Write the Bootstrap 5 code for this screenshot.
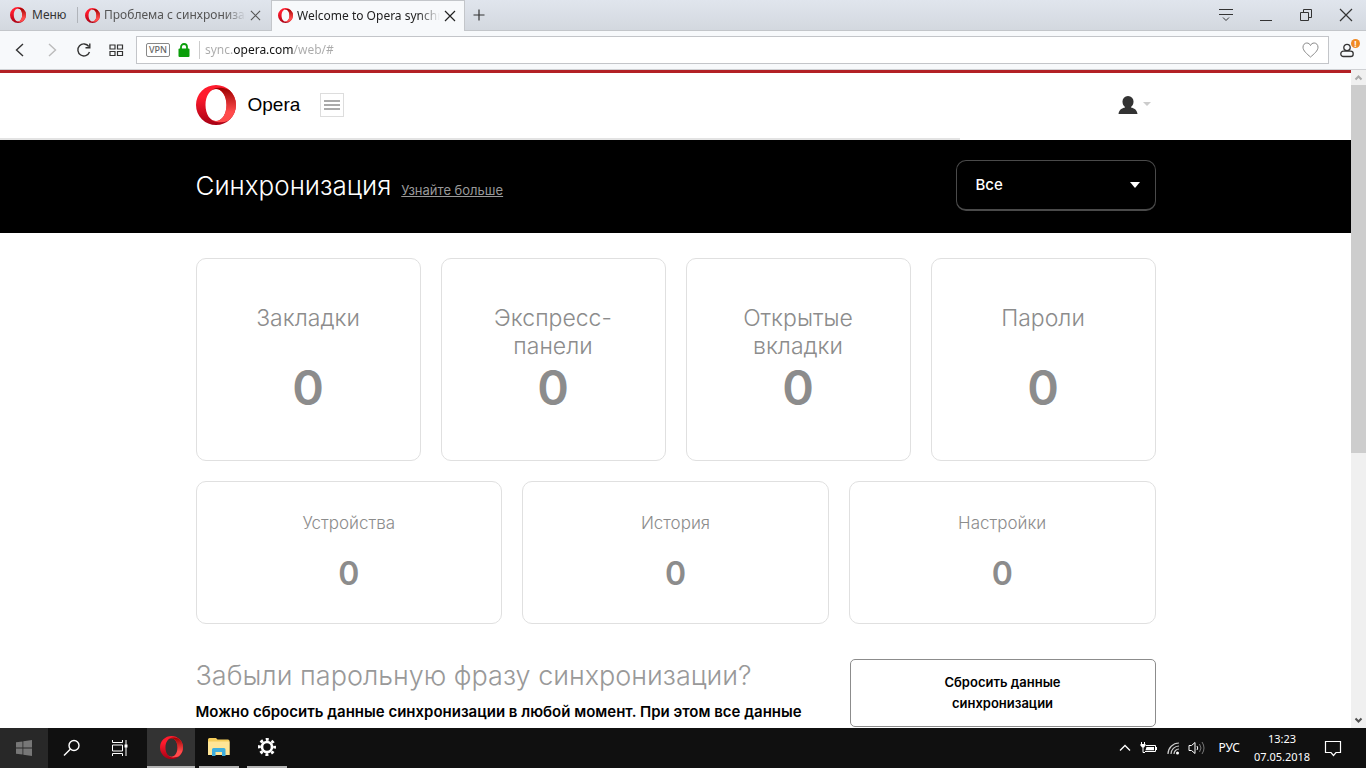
<!DOCTYPE html>
<html lang="ru">
<head>
<meta charset="utf-8">
<meta name="viewport" content="width=device-width, initial-scale=1">
<title>Welcome to Opera synchronization</title>
<link href="https://cdn.jsdelivr.net/npm/bootstrap@5.3.0/dist/css/bootstrap.min.css" rel="stylesheet">
<style>
  :root { --ui: "Noto Sans", "Open Sans", sans-serif; --site: Inter, "Liberation Sans", sans-serif; }
  body { font-family: var(--ui); font-size: 12px; line-height: 16px; color: #222; background: #fff; }
  svg { display: block; flex-shrink: 0; }
  button { border: 0; background: none; padding: 0; color: inherit; }

  /* browser chrome */
  .tabstrip { height: 31px; background: linear-gradient(#e0e5ed, #d3d8df); border-bottom: 1px solid #c3c6ca; }
  .menu-btn { width: 77px; padding-left: 10px; gap: 6px; color: #333; }
  .tab-item { height: 31px; gap: 4px; color: #555; }
  .tab-idle { width: 194px; padding: 0 10px 0 8px; }
  .tab-idle::before { content: ""; width: 1px; height: 16px; margin-left: -8px; margin-right: 3px; background: #b0b4ba; }
  .tab-live { width: 194px; padding: 0 8px 0 6px; background: #f7f9fb; border: 1px solid #c3c6ca; border-bottom: 0; color: #222; }
  .tab-title { overflow: hidden; white-space: nowrap; flex: 1 1 0; min-width: 0; -webkit-mask-image: linear-gradient(90deg, #000 85%, transparent); mask-image: linear-gradient(90deg, #000 85%, transparent); }
  .win-controls { gap: 24px; padding-right: 12px; color: #333; }
  .toolbar-row { height: 39px; background: #f7f9fb; border-bottom: 1px solid #cfd1d4; padding: 0 12px; }
  .nav-btns { gap: 16px; width: 124px; color: #333; }
  .address { height: 28px; border: 1px solid #c3c5c9; background: #fff; padding: 0 9px; }
  .vpn { border: 1px solid #888; border-radius: 2px; width: 24px; height: 14px; font-size: 9px; line-height: 12px; text-align: center; font-weight: 500; color: #666; }
  .address-sep { width: 1px; height: 18px; background: #ccc; margin: 0 5px 0 9px; }
  .address-input { border: 0; outline: 0; padding: 0; min-width: 0; color: #111; font-size: 12px; line-height: 20px;
    background: linear-gradient(90deg, #aaa 0 28px, #111 28px 89px, #aaa 89px); -webkit-background-clip: text; background-clip: text; -webkit-text-fill-color: transparent; }
  .alert-dot { top: -4px; right: -6px; width: 9px; height: 9px; border-radius: 50%; background: #f08a24; color: #fff; font-size: 8px; line-height: 9px; text-align: center; font-weight: 700; }
  .profile-btn { margin-left: 11px; }

  /* page */
  .page-view { font-family: var(--site); overflow: hidden; min-width: 0; }
  .content-width { width: 100%; max-width: 960px; margin: 0 auto; }
  .site-top { border-top: 3px solid #b32025; height: 70px; padding-bottom: 4px; }
  .brand-name { font-family: "Liberation Sans", sans-serif; font-size: 19px; line-height: 24px; color: #000; margin-left: 12px; }
  .burger { width: 24px; height: 24px; border: 1px solid #ddd; margin-left: 20px; color: #aaa; }
  .load-line { height: 2px; margin-top: -2px; max-width: 960px; background: #e3e3e3; }
  .hero { background: #000; color: #fff; height: 93px; padding-bottom: 2px; }
  .hero h1 { font-size: 26px; line-height: 32px; font-weight: 300; }
  .hero a { color: #999; font-size: 13px; line-height: 16px; margin-left: 10px; }
  .filter-select { width: 200px; height: 51px; padding: 0 19px; border: 1px solid #4a4a4a; border-bottom-width: 2px; border-radius: 10px; background-color: #000; color: #fff; font-size: 15px; font-weight: 500;
    background-image: url("data:image/svg+xml,%3Csvg xmlns='http://www.w3.org/2000/svg' viewBox='0 0 10 6'%3E%3Cpath fill='%23fff' d='M0 0h10L5 6z'/%3E%3C/svg%3E"); background-size: 10px 6px; background-position: right 15px center; }
  .page-body { padding-top: 25px; }
  .tiles { gap: 20px; margin-bottom: 20px; }
  .tile { flex: 1 1 0; border: 1px solid #e0e0e0; border-radius: 10px; text-align: center; color: #8c8c8c; font-weight: 300; }
  .tile h2 { font-weight: 300; }
  .tile strong { font-weight: 600; }
  .tile-lg { height: 203px; padding: 45px 40px 0; }
  .tile-lg h2 { font-size: 23px; line-height: 28px; height: 56px; margin: 0; }
  .tile-lg strong { font-size: 48px; line-height: 56px; }
  .tile-sm { height: 143px; padding: 29px 20px 0; }
  .tile-sm h2 { font-size: 17px; line-height: 24px; margin: 0 0 19px; }
  .tile-sm strong { font-size: 32px; line-height: 40px; }
  .reset-row { padding-top: 15px; }
  .reset-copy h2 { font-size: 27px; line-height: 34px; font-weight: 300; color: #999; margin: 0 0 8px; white-space: nowrap; }
  .reset-copy p { font-size: 15px; line-height: 21px; font-weight: 600; color: #000; margin: 0; }
  .reset-btn { width: 306px; height: 68px; border: 1px solid #8c8c8c; border-radius: 5px; font-size: 13px; line-height: 21px; font-weight: 600; color: #000; padding: 0 80px; }
  .scroll-rail { width: 15px; background: #f0f0f0; }
  .scroll-thumb { height: 56%; width: 100%; background: #cdcdcd; }

  /* taskbar */
  .taskbar { height: 40px; background: #101010; color: #fff; }
  .task-btn { width: 48px; height: 40px; }
  .task-start { background: #282828; }
  .task-live { background: #333; border-bottom: 2px solid #b5b5b5; margin-left: 3px; }
  .task-open { width: 40px; border-bottom: 2px solid #b5b5b5; }
  .tray { padding-right: 24px; }
  .clock { width: 60px; font-size: 11px; line-height: 18px; text-align: center; }
</style>
</head>
<body class="vh-100 d-flex flex-column overflow-hidden">
<svg width="0" height="0" class="position-absolute" aria-hidden="true">
  <defs>
    <linearGradient id="ringA" x1="0" y1="0" x2="0" y2="1"><stop offset=".3" stop-color="#ff1b2d"/><stop offset="1" stop-color="#a70014"/></linearGradient>
    <linearGradient id="ringB" x1="0" y1="0" x2="0" y2="1"><stop offset="0" stop-color="#9c0000"/><stop offset=".7" stop-color="#ff4b4b"/></linearGradient>
    <symbol id="opera" viewBox="0 0 40 40">
      <path fill="url(#ringA)" fill-rule="evenodd" d="M20 0a20 20 0 1 0 0 40 20 20 0 1 0 0-40zM20 4c6 0 10.500 7 10.500 16S26 36 20 36 9.500 29 9.500 20 14 4 20 4z"/>
      <path fill="url(#ringB)" d="M13.400 7.400C15 5.300 17.500 4 20 4c6 0 10.500 7 10.500 16S26 36 20 36c-2.500 0-5-1.300-6.600-3.400 2.300 2.900 5.600 4.700 9.300 4.700 3.800 0 7.600-.5 10.600-2.400a20 20 0 0 0 0-29.800C30 3 26.300 2.700 22.700 2.700c-3.700 0-7 1.800-9.300 4.700z"/>
    </symbol>
    <symbol id="cross" viewBox="0 0 12 12"><path d="M1 1l10 10M11 1L1 11" fill="none" stroke="currentColor" stroke-width="1.200"/></symbol>
  </defs>
</svg>

<header class="flex-shrink-0">
  <div class="tabstrip d-flex align-items-center">
    <button class="menu-btn d-flex align-items-center"><svg width="16" height="16"><use href="#opera"/></svg>Меню</button>
    <div class="tab-item tab-idle d-flex align-items-center">
      <svg width="15" height="15"><use href="#opera"/></svg>
      <span class="tab-title">Проблема с синхронизац</span>
      <button aria-label="Закрыть вкладку"><svg width="11" height="11"><use href="#cross"/></svg></button>
    </div>
    <div class="tab-item tab-live d-flex align-items-center">
      <svg width="15" height="15"><use href="#opera"/></svg>
      <span class="tab-title">Welcome to Opera synchro</span>
      <button aria-label="Закрыть вкладку"><svg width="12" height="12"><use href="#cross"/></svg></button>
    </div>
    <button class="ms-2" aria-label="Новая вкладка"><svg width="12" height="12" viewBox="0 0 12 12"><path d="M6 .5v11M.5 6h11" stroke="#333" stroke-width="1.200"/></svg></button>
    <div class="win-controls d-flex align-items-center ms-auto">
      <button aria-label="Меню вкладок"><svg width="16" height="14" viewBox="0 0 16 14"><path d="M1 1.500h14M1 6.500h14M5 9.500l3 3 3-3" fill="none" stroke="currentColor"/></svg></button>
      <button aria-label="Свернуть"><svg width="16" height="14" viewBox="0 0 16 14"><path d="M2 12.500h12" stroke="currentColor"/></svg></button>
      <button aria-label="Восстановить"><svg width="16" height="14" viewBox="0 0 16 14"><path d="M2.500 4.500h8v8h-8zM5.500 4.500v-3h8v8h-3" fill="none" stroke="currentColor"/></svg></button>
      <button aria-label="Закрыть"><svg width="16" height="14" viewBox="0 0 16 14"><path d="M2 1l12 12M14 1L2 13" stroke="currentColor" stroke-width="1.200"/></svg></button>
    </div>
  </div>
  <div class="toolbar-row d-flex align-items-center">
    <div class="nav-btns d-flex align-items-center flex-shrink-0">
      <button aria-label="Назад"><svg width="16" height="16" viewBox="0 0 16 16"><path d="M11 2L4.500 8l6.500 6" fill="none" stroke="currentColor" stroke-width="1.400"/></svg></button>
      <button aria-label="Вперёд"><svg width="16" height="16" viewBox="0 0 16 16"><path d="M5 2l6.500 6L5 14" fill="none" stroke="#bbb" stroke-width="1.400"/></svg></button>
      <button aria-label="Обновить"><svg width="16" height="16" viewBox="0 0 16 16"><path d="M13.500 10A6 6 0 1 1 12.800 4.500M13.800 1.500v4.300H9.500" fill="none" stroke="currentColor" stroke-width="1.400"/></svg></button>
      <button aria-label="Экспресс-панель"><svg width="16" height="16" viewBox="0 0 16 16"><path d="M2 3h5v4H2zM9.500 3h5v4h-5zM2 9.500h5v4H2zM9.500 9.500h5v4h-5z" fill="none" stroke="currentColor" stroke-width="1.200"/></svg></button>
    </div>
    <div class="address d-flex align-items-center flex-grow-1">
      <span class="vpn">VPN</span>
      <svg class="ms-2" width="12" height="14" viewBox="0 0 12 14"><path d="M3 6V4a3 3 0 0 1 6 0v2" fill="none" stroke="#0a9e0a" stroke-width="1.800"/><rect x=".5" y="5.500" width="11" height="8.500" rx="1" fill="#0a9e0a"/></svg>
      <span class="address-sep"></span>
      <input class="address-input flex-grow-1" type="text" aria-label="Адрес" value="sync.opera.com/web/#">
      <button aria-label="В закладки"><svg width="17" height="16" viewBox="0 0 17 16"><path d="M8.500 15C5 12 1 8.800 1 5.200 1 2.800 2.700 1 4.800 1c1.600 0 3 .9 3.700 2.500C9.200 1.900 10.600 1 12.200 1 14.300 1 16 2.800 16 5.200c0 3.600-4 6.800-7.500 9.800z" fill="none" stroke="#888"/></svg></button>
    </div>
    <button class="profile-btn position-relative" aria-label="Профиль"><svg width="14" height="15" viewBox="0 0 14 15"><circle cx="7" cy="4.500" r="3.200" fill="none" stroke="#333" stroke-width="1.300"/><rect x=".8" y="8.200" width="12.400" height="5.300" rx="2.600" fill="#f7f9fb" stroke="#333" stroke-width="1.300"/></svg><span class="alert-dot position-absolute">!</span></button>
  </div>
</header>

<div class="d-flex flex-grow-1 overflow-hidden">
  <main class="page-view flex-grow-1">
    <div class="site-top">
      <div class="content-width d-flex align-items-center h-100">
        <a href="#" class="d-flex align-items-center text-decoration-none"><svg width="40" height="40"><use href="#opera"/></svg><span class="brand-name">Opera</span></a>
        <button class="burger d-flex align-items-center justify-content-center" aria-label="Меню сайта"><svg width="16" height="12" viewBox="0 0 16 12"><path d="M0 2h16M0 6h16M0 10h16" stroke="currentColor" stroke-width="2"/></svg></button>
        <button class="ms-auto me-1 d-flex align-items-center" aria-label="Учётная запись"><svg width="20" height="18" viewBox="0 0 20 18"><path d="M10 0a5.500 5.500 0 0 1 5.500 6c-.2 2.400-1.100 3.900-2.500 5v.6c3 .8 6 2 6.500 6.400H.5C1 13.600 4 12.400 7 11.600V11C5.600 9.900 4.700 8.400 4.500 6A5.500 5.500 0 0 1 10 0z" fill="#333"/></svg><svg class="ms-1" width="10" height="5" viewBox="0 0 10 5"><path d="M1 0h8L5 4z" fill="#ccc"/></svg></button>
      </div>
    </div>
    <div class="load-line"></div>
    <div class="hero d-flex align-items-center">
      <div class="content-width d-flex align-items-center justify-content-between">
        <div class="d-flex align-items-baseline"><h1 class="mb-0">Синхронизация</h1><a href="#">Узнайте больше</a></div>
        <select class="form-select filter-select" aria-label="Тип данных"><option>Все</option></select>
      </div>
    </div>
    <div class="content-width page-body">
      <div class="tiles d-flex">
        <section class="tile tile-lg"><h2>Закладки</h2><strong>0</strong></section>
        <section class="tile tile-lg"><h2>Экспресс-<br>панели</h2><strong>0</strong></section>
        <section class="tile tile-lg"><h2>Открытые вкладки</h2><strong>0</strong></section>
        <section class="tile tile-lg"><h2>Пароли</h2><strong>0</strong></section>
      </div>
      <div class="tiles d-flex">
        <section class="tile tile-sm"><h2>Устройства</h2><strong>0</strong></section>
        <section class="tile tile-sm"><h2>История</h2><strong>0</strong></section>
        <section class="tile tile-sm"><h2>Настройки</h2><strong>0</strong></section>
      </div>
      <div class="reset-row d-flex align-items-start">
        <div class="reset-copy flex-grow-1"><h2>Забыли парольную фразу синхронизации?</h2><p>Можно сбросить данные синхронизации в любой момент. При этом все данные</p></div>
        <button class="reset-btn flex-shrink-0">Сбросить данные синхронизации</button>
      </div>
    </div>
  </main>
  <div class="scroll-rail d-flex flex-column align-items-center flex-shrink-0" aria-hidden="true">
    <svg width="15" height="15" viewBox="0 0 15 15"><path d="M4.500 9.500l3-3 3 3" fill="none" stroke="#aaa" stroke-width="2"/></svg>
    <div class="scroll-thumb"></div>
    <svg class="mt-auto" width="15" height="15" viewBox="0 0 15 15"><path d="M4.500 5.500l3 3 3-3" fill="none" stroke="#505050" stroke-width="2"/></svg>
  </div>
</div>

<footer class="taskbar d-flex align-items-center flex-shrink-0">
  <button class="task-btn task-start d-flex align-items-center justify-content-center" aria-label="Пуск"><svg width="16" height="16" viewBox="0 0 16 16"><path d="M0 2.300L6.500 1.400v6.200H0zM7.300 1.300L16 0v7.600H7.300zM0 8.400h6.500v6.200L0 13.700zM7.300 8.400H16V16l-8.700-1.300z" fill="#777"/></svg></button>
  <button class="task-btn d-flex align-items-center justify-content-center" aria-label="Поиск"><svg width="18" height="18" viewBox="0 0 18 18"><circle cx="11" cy="6.500" r="5" fill="none" stroke="#fff" stroke-width="1.400"/><path d="M7.500 10L1 16.500" stroke="#fff" stroke-width="1.400"/></svg></button>
  <button class="task-btn d-flex align-items-center justify-content-center" aria-label="Представление задач"><svg width="18" height="16" viewBox="0 0 18 16"><path d="M1.500 0v2.500h10V0M1.500 16v-2.500h10V16M1.500 5h10v6h-10zM15 0v16" fill="none" stroke="#fff"/><path d="M13.500 4.500h3v3h-3z" fill="#fff"/></svg></button>
  <button class="task-btn task-live d-flex align-items-center justify-content-center" aria-label="Opera"><svg width="23" height="23"><use href="#opera"/></svg></button>
  <button class="task-btn task-open d-flex align-items-center justify-content-center ms-1" aria-label="Проводник"><svg width="22" height="18" viewBox="0 0 22 18"><path d="M0 1.500Q0 0 1.500 0H8l1.500 1.500H20q1.500 0 1.500 1.500v14H0z" fill="#f5cd5b"/><path d="M0 3.500h21.500V17H0z" fill="#ffe596"/><path d="M4 18v-6.500Q4 10 5.500 10h10.500q1.500 0 1.500 1.500V18H14v-4H7.500v4z" fill="#3eaede"/></svg></button>
  <button class="task-btn task-open d-flex align-items-center justify-content-center ms-2" aria-label="Параметры"><svg width="20" height="20" viewBox="0 0 20 20"><g stroke="#fff" fill="none"><circle cx="10" cy="10" r="5" stroke-width="2.600"/><circle cx="10" cy="10" r="7.600" stroke-width="2.800" stroke-dasharray="3 2.970" stroke-dashoffset="1.500"/></g></svg></button>
  <div class="tray d-flex align-items-center ms-auto gap-2">
    <svg width="14" height="14" viewBox="0 0 14 14"><path d="M2 9.500l5-5 5 5" fill="none" stroke="#fff" stroke-width="1.300"/></svg>
    <svg width="18" height="14" viewBox="0 0 18 14"><path d="M1.500 1v2M4.500 1v2M3 6v5.500h2" stroke="#fff" fill="none"/><path d="M.5 3h5v1.500L4 6.500H2L.5 4.500z" fill="#fff"/><path d="M6 4.500h9.500v6H5M16.500 6v3" fill="none" stroke="#fff"/><path d="M6.500 6h7.500v3.200H5.500z" fill="#fff"/></svg>
    <svg width="14" height="14" viewBox="0 0 14 14"><path d="M2 13A11 11 0 0 1 13 2M5 13a8 8 0 0 1 8-8M8 13a5 5 0 0 1 5-5" fill="none" stroke="#ccc" stroke-width="1.200"/><circle cx="11.500" cy="12" r="1.500" fill="#fff"/></svg>
    <svg width="18" height="14" viewBox="0 0 18 14"><path d="M1 4.500h2.500L7 1.500v11L3.500 9.500H1z" fill="none" stroke="#fff"/><path d="M9 5q1.500 2 0 4" fill="none" stroke="#fff"/><path d="M11.500 3q3 4 0 8M14 1q4 6 0 12" fill="none" stroke="#777"/></svg>
    <span class="ms-1">РУС</span>
    <div class="clock ms-1">13:23<br>07.05.2018</div>
    <svg class="ms-1" width="18" height="17" viewBox="0 0 18 17"><path d="M1.500 1.500h15v11h-4.500L9.500 15.500 7 12.500H1.500z" fill="none" stroke="#fff" stroke-width="1.200"/></svg>
  </div>
</footer>
<script src="https://cdn.jsdelivr.net/npm/bootstrap@5.3.0/dist/js/bootstrap.bundle.min.js"></script>
</body>
</html>
